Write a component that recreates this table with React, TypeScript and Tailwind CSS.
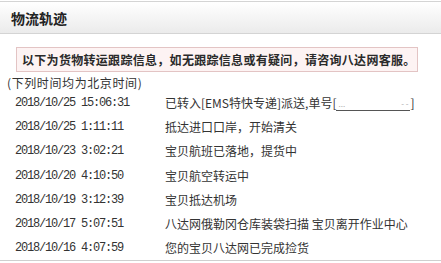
import React from 'react';

interface TrackRow {
  time: string;
  text: React.ReactNode;
}

const cjk = { fontFamily: '"Noto Sans CJK SC", "Noto Sans", sans-serif' };
const mono = { fontFamily: '"Liberation Mono", "DejaVu Sans Mono", monospace' };

function MaskedNumber() {
  // tracking number is blurred out in the source
  return (
    <span className="inline-flex items-end">
      <span>[</span>
      <span className="inline-flex justify-between w-[74px] h-[12px] border-b border-[#555] relative top-[-1px] text-[8px] leading-[10px] text-[#aaa] px-[2px]">
        <span>...</span>
        <span>- -</span>
      </span>
      <span>]</span>
    </span>
  );
}

const rows: TrackRow[] = [
  {
    time: '2018/10/25 15:06:31',
    text: (
      <>
        已转入[EMS特快专递]派送,单号<MaskedNumber />
      </>
    ),
  },
  { time: '2018/10/25 1:11:11', text: '抵达进口口岸，开始清关' },
  { time: '2018/10/23 3:02:21', text: '宝贝航班已落地，提货中' },
  { time: '2018/10/20 4:10:50', text: '宝贝航空转运中' },
  { time: '2018/10/19 3:12:39', text: '宝贝抵达机场' },
  { time: '2018/10/17 5:07:51', text: '八达网俄勒冈仓库装袋扫描 宝贝离开作业中心' },
  { time: '2018/10/16 4:07:59', text: '您的宝贝八达网已完成捡货' },
];

export default function App() {
  return (
    <div className="w-[441px] h-[263px] bg-white overflow-hidden text-[#333]" style={cjk}>
      <div className="pt-px">
        {/* Header */}
        <div className="h-[33px] border-t border-b border-[#d4d4d4] bg-gradient-to-b from-[#ffffff] to-[#ebebeb] flex items-center pl-[11px]">
          <h3 className="text-[14px] font-bold text-[#222] leading-none">物流轨迹</h3>
        </div>

        {/* Notice */}
        <div className="mt-[13px] ml-[16px] w-[402px] h-[25px] border border-[#e3c4c4] bg-[#fdf3f3] pl-[5px] flex items-center">
          <p className="text-[12px] font-bold text-[#2a2a2a] leading-none tracking-[0.3px]">
            以下为货物转运跟踪信息，如无跟踪信息或有疑问，请咨询八达网客服。
          </p>
        </div>

        <div className="mt-[3px] h-[16px] pl-[7px] text-[12px] leading-[16px] text-[#333] tracking-[0.6px]">
          (下列时间均为北京时间)
        </div>

        {/* Tracking rows */}
        <div className="border-b border-[#cfcfcf]">
          {rows.map((r) => (
            <div key={r.time} className="h-[24.2px] flex items-center text-[12px]">
              <div className="w-[165px] pl-[15px] tracking-[-1.2px] text-[#333]" style={mono}>
                {r.time}
              </div>
              <div className="text-[#333] whitespace-nowrap">{r.text}</div>
            </div>
          ))}
        </div>
      </div>
    </div>
  );
}
